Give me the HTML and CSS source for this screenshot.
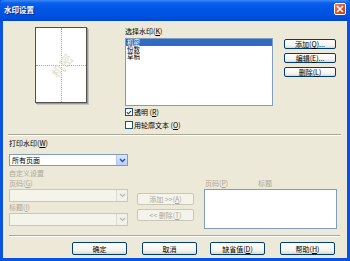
FILE: index.html
```html
<!DOCTYPE html>
<html lang="zh">
<head>
<meta charset="utf-8">
<title>水印设置</title>
<link rel="stylesheet" href="styles.css">
</head>
<body>
<div class="window">
  <div class="titlebar">
    <span class="title">水印设置</span>
    <span class="close"><svg width="8" height="8" viewBox="0 0 8 8"><path d="M1 1L7 7M7 1L1 7" stroke="#fff" stroke-width="1.6"/></svg></span>
  </div>
  <div class="client">
    <div class="top">
      <div class="preview">
        <span class="vline"></span>
        <span class="hline"></span>
        <span class="wm">机密</span>
      </div>
      <div class="choose">
        <div class="lbl">选择水印(<u>K</u>)</div>
        <div class="listbox">
          <div class="item sel">机密</div>
          <div class="item">份数</div>
          <div class="item">草稿</div>
        </div>
        <div class="check first"><span class="box"><svg width="7" height="7" viewBox="0 0 7 7"><path d="M1 3.2L2.8 5L6 1.5" fill="none" stroke="#3c3c3c" stroke-width="1.3"/></svg></span>透明 (<u>R</u>)</div>
        <div class="check second"><span class="box"></span>用轮廓文本 (<u>O</u>)</div>
      </div>
      <div class="side">
        <div class="btn small">添加(<u>Q</u>)...</div>
        <div class="btn small">编辑(<u>E</u>)...</div>
        <div class="btn small">删除(<u>L</u>)</div>
      </div>
    </div>
    <div class="sep first-sep"></div>
    <div class="bottom">
      <div class="leftcol">
        <div class="lbl l1">打印水印(<u>W</u>)</div>
        <div class="combo">
          <span class="val">所有页面</span>
          <span class="arrow"><svg width="7" height="5" viewBox="0 0 7 5"><path d="M1 1L3.5 3.5L6 1" fill="none" stroke="#2b4e9c" stroke-width="1.4"/></svg></span>
        </div>
        <div class="lbl dis l2">自定义设置</div>
        <div class="lbl dis">页码(<u>G</u>)</div>
        <div class="combo disabled c2">
          <span class="val"></span>
          <span class="arrow"><svg width="7" height="5" viewBox="0 0 7 5"><path d="M1 1L3.5 3.5L6 1" fill="none" stroke="#bab8ac" stroke-width="1.2"/></svg></span>
        </div>
        <div class="lbl dis">标题(<u>I</u>)</div>
        <div class="combo disabled c3">
          <span class="val"></span>
          <span class="arrow"><svg width="7" height="5" viewBox="0 0 7 5"><path d="M1 1L3.5 3.5L6 1" fill="none" stroke="#bab8ac" stroke-width="1.2"/></svg></span>
        </div>
      </div>
      <div class="midcol">
        <div class="btn mid disabled">添加 &gt;&gt;(<u>A</u>)</div>
        <div class="btn mid disabled">&lt;&lt; 删除(<u>T</u>)</div>
      </div>
      <div class="rightcol">
        <div class="heads"><span class="dis h1">页码(<u>P</u>)</span><span class="dis">标题</span></div>
        <div class="plist"></div>
      </div>
    </div>
    <div class="sep second-sep"></div>
    <div class="footer">
      <div class="btn big">确定</div>
      <div class="btn big">取消</div>
      <div class="btn big">缺省值(<u>D</u>)</div>
      <div class="btn big">帮助(<u>H</u>)</div>
    </div>
  </div>
</div>
</body>
</html>
```
FILE: styles.css
```css
html, body {
  margin: 0;
  padding: 0;
  background: #ece9d8;
}
body {
  font-family: "Noto Sans CJK SC", "Noto Sans", sans-serif;
  font-size: 7px;
  color: #000;
}
.window {
  width: 350px;
  height: 261px;
  box-sizing: border-box;
  background: #0a52e0;
  display: flex;
  flex-direction: column;
}
.titlebar {
  height: 21px;
  flex: none;
  display: flex;
  align-items: flex-start;
  background: linear-gradient(#3b8af5 0, #0a5fee 3px, #0055e5 9px, #0052e0 16px, #0046cf 21px);
  border-radius: 4px 4px 0 0;
}
.title {
  color: #fff;
  font-weight: bold;
  font-size: 7.5px;
  line-height: 10px;
  margin: 5px 0 0 4px;
  text-shadow: 1px 1px 0 #0a2a8a;
}
.close {
  margin: 3px 4px 0 auto;
  width: 12px;
  height: 12px;
  box-sizing: border-box;
  border: 1px solid #fff;
  border-radius: 2px;
  background: linear-gradient(135deg, #f08860, #e0502a 50%, #c43a18);
  display: flex;
  align-items: center;
  justify-content: center;
}
.client {
  margin: 0 3px 3px 3px;
  flex: 1;
  background: #ece9d8;
  display: flex;
  flex-direction: column;
}
.top {
  height: 113px;
  display: flex;
  flex: none;
}
.preview {
  position: relative;
  overflow: hidden;
  margin: 6px 0 0 32px;
  width: 52px;
  height: 76px;
  box-sizing: border-box;
  background: #fff;
  border: 1px solid #505050;
  box-shadow: 1px 1px 0 #9a9a9a, 2px 2px 0 #c8c6bc;
}
.vline {
  position: absolute;
  left: 25px;
  top: 0;
  bottom: 0;
  border-left: 1px dotted #a8a8a8;
}
.hline {
  position: absolute;
  top: 37px;
  left: 0;
  right: 0;
  border-top: 1px dotted #a8a8a8;
}
.wm {
  position: absolute;
  left: 12px;
  top: 29px;
  width: 28px;
  text-align: center;
  font-size: 13px;
  line-height: 18px;
  color: #e2dece;
  transform: rotate(-52deg);
}
.choose {
  margin: 5px 0 0 38px;
  width: 148px;
}
.lbl {
  line-height: 10px;
  height: 10px;
  white-space: nowrap;
}
.dis {
  color: #aca899;
}
.listbox {
  margin-top: 2px;
  height: 68px;
  box-sizing: border-box;
  border: 1px solid #7f9db9;
  background: #fff;
}
.item {
  height: 7px;
  line-height: 7px;
  font-size: 6.5px;
  padding-left: 1px;
}
.item.sel {
  background: #316ac5;
  color: #fff;
}
.check {
  display: flex;
  align-items: center;
  height: 8px;
  line-height: 8px;
  white-space: nowrap;
}
.check.first { margin-top: 2px; }
.check.second { margin-top: 5px; }
.box {
  width: 8px;
  height: 8px;
  box-sizing: border-box;
  border: 1px solid #1c5180;
  background: #fff;
  margin-right: 1px;
  display: flex;
  align-items: center;
  justify-content: center;
}
.side {
  margin: 18px 0 0 11px;
  width: 52px;
  display: flex;
  flex-direction: column;
  gap: 4px;
}
.btn {
  box-sizing: border-box;
  border: 1px solid #003c74;
  border-radius: 2px;
  background: linear-gradient(#ffffff, #f4f3ee 70%, #dcd8c8);
  display: flex;
  align-items: center;
  justify-content: center;
  white-space: nowrap;
}
.btn.small {
  height: 10px;
  line-height: 8px;
}
.btn.disabled {
  border-color: #c9c7ba;
  background: #f5f4ea;
  color: #aca899;
}
.sep {
  flex: none;
  border-top: 1px solid #aca899;
  border-bottom: 1px solid #fff;
  height: 0;
}
.first-sep {
  margin-left: 5px;
  width: 333px;
}
.bottom {
  height: 99px;
  flex: none;
  display: flex;
}
.leftcol {
  margin-left: 6px;
  width: 119px;
}
.l1 { margin-top: 2px; }
.l2 { margin-top: 2px; }
.combo {
  margin-top: 6px;
  height: 12px;
  box-sizing: border-box;
  border: 1px solid #7f9db9;
  background: #fff;
  display: flex;
  align-items: stretch;
}
.combo .val {
  flex: 1;
  line-height: 10px;
  padding-left: 2px;
}
.combo .arrow {
  width: 10px;
  background: linear-gradient(#dbe6fd, #b9cdf8);
  border-left: 1px solid #b2c6f0;
  display: flex;
  align-items: center;
  justify-content: center;
}
.combo.disabled {
  height: 13px;
  border-color: #c9c7ba;
  background: #f5f4ea;
}
.combo.disabled .arrow {
  background: #f3f2ea;
  border-left: 1px solid #dcdace;
}
.combo.c2 { margin-top: 1px; }
.combo.c3 { margin-top: 1px; }
.midcol {
  margin: 57px 0 0 9px;
  width: 57px;
  display: flex;
  flex-direction: column;
  gap: 4px;
}
.btn.mid {
  height: 12px;
}
.rightcol {
  margin: 42px 0 0 10px;
  width: 133px;
}
.heads {
  height: 10px;
  line-height: 10px;
  display: flex;
  white-space: nowrap;
}
.h1 {
  margin-left: 1px;
  width: 53px;
}
.plist {
  margin-top: 1px;
  height: 40px;
  box-sizing: border-box;
  border: 1px solid #7f9db9;
  background: #fff;
}
.second-sep {
  margin-left: 6px;
  width: 331px;
}
.footer {
  display: flex;
  margin: 5px 0 0 69px;
  gap: 15px;
}
.btn.big {
  width: 55px;
  height: 13px;
}
.footer .btn:nth-child(3) {
  margin-left: -2px;
}
```
